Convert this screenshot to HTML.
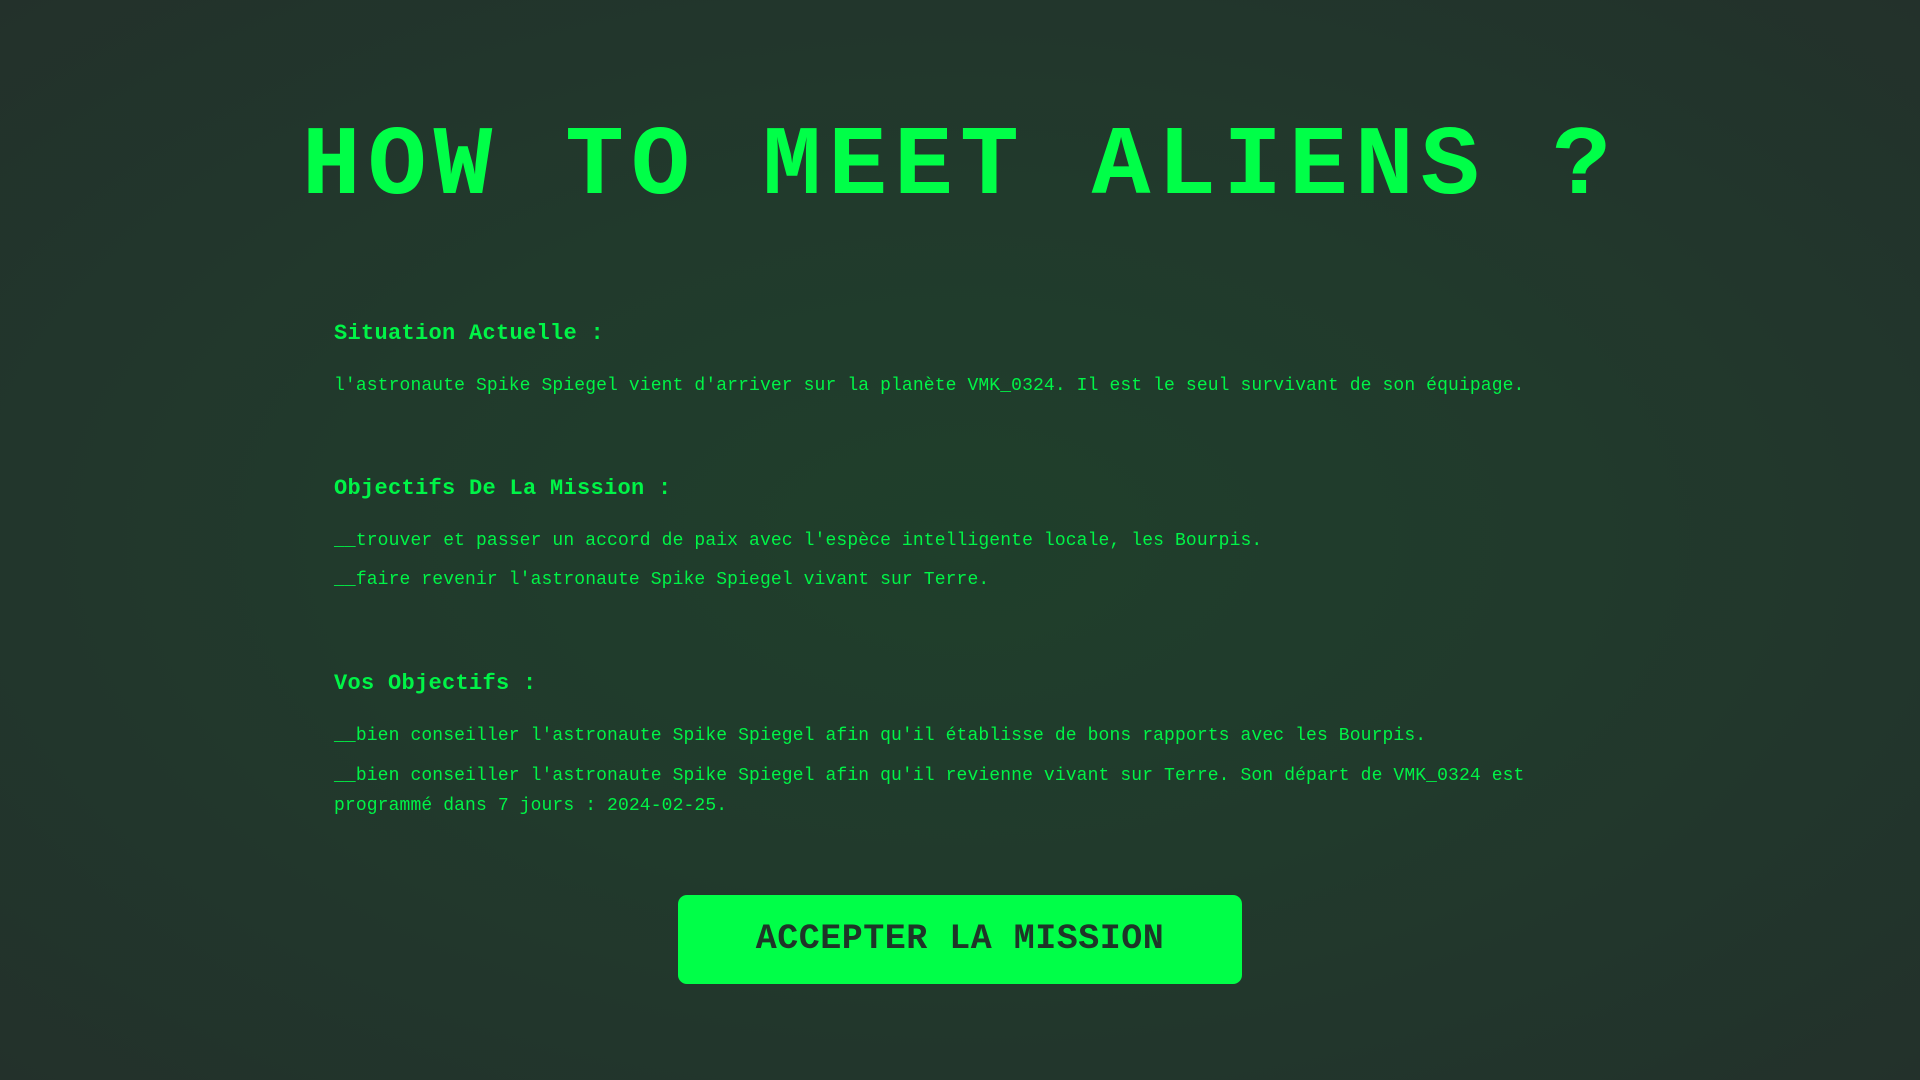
<!DOCTYPE html>
<html><head><meta charset="utf-8"><style>
html,body{margin:0;padding:0;width:1920px;height:1080px;overflow:hidden}
body{background:radial-gradient(ellipse at 50% 50%,#1f3f2b 0%,#213a2c 45%,#23312b 100%);font-family:"Liberation Mono",monospace;color:#00f447;position:relative}
h1{position:absolute;left:0;width:1920px;top:103px;margin:0;text-align:center;font-size:98px;font-weight:bold;letter-spacing:7px;color:#00ff48;line-height:130px}
.h{position:absolute;left:334px;font-size:22px;font-weight:bold;letter-spacing:0.3px;margin:0}
.p{position:absolute;left:334px;font-size:18px;margin:0;line-height:30px;width:1250px;letter-spacing:0.12px}
.btn{position:absolute;left:678px;top:895px;width:564px;height:89px;background:#00ff48;border-radius:9px;color:#1e3528;font-size:35px;font-weight:bold;text-align:center;line-height:89px;letter-spacing:0.5px}
</style></head><body>
<h1>HOW TO MEET ALIENS ?</h1>
<div class="h" style="top:321px">Situation Actuelle :</div>
<div class="p" style="top:371px">l'astronaute Spike Spiegel vient d'arriver sur la planète VMK_0324. Il est le seul survivant de son équipage.</div>
<div class="h" style="top:476px">Objectifs De La Mission :</div>
<div class="p" style="top:526px">__trouver et passer un accord de paix avec l'espèce intelligente locale, les Bourpis.</div>
<div class="p" style="top:565px">__faire revenir l'astronaute Spike Spiegel vivant sur Terre.</div>
<div class="h" style="top:671px">Vos Objectifs :</div>
<div class="p" style="top:721px">__bien conseiller l'astronaute Spike Spiegel afin qu'il établisse de bons rapports avec les Bourpis.</div>
<div class="p" style="top:761px">__bien conseiller l'astronaute Spike Spiegel afin qu'il revienne vivant sur Terre. Son départ de VMK_0324 est programmé dans 7 jours : 2024-02-25.</div>
<div class="btn">ACCEPTER LA MISSION</div>
</body></html>
